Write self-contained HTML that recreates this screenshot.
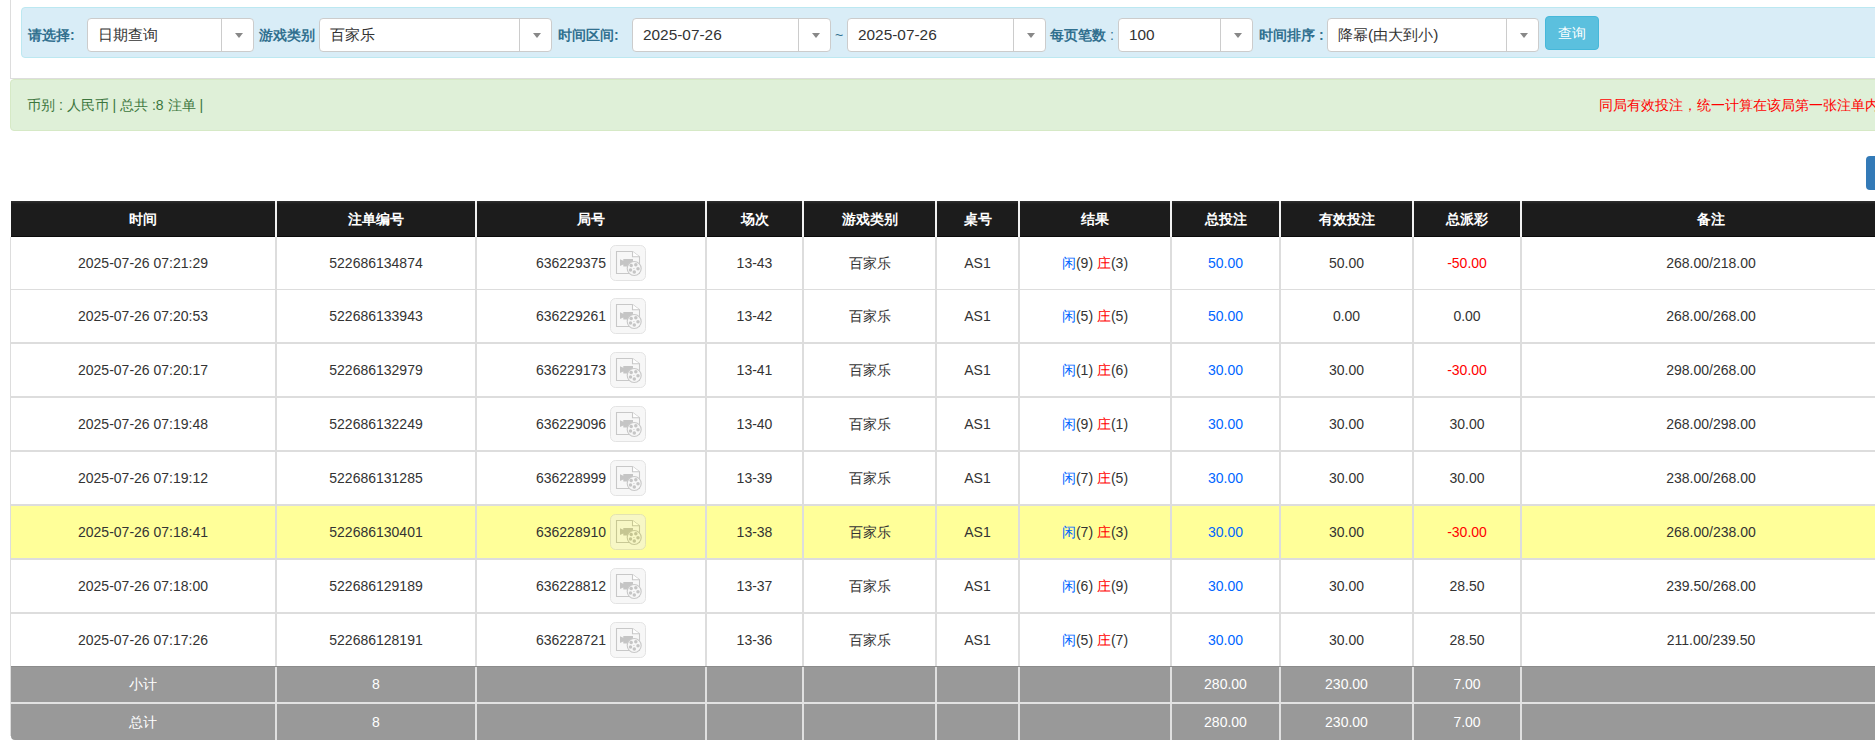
<!DOCTYPE html>
<html><head><meta charset="utf-8">
<style>
*{box-sizing:border-box;margin:0;padding:0}
html,body{width:1875px;height:740px;overflow:hidden;background:#fff;font-family:"Liberation Sans",sans-serif;font-size:14px;color:#333;position:relative}
.a{position:absolute}
#topbox{position:absolute;left:10px;top:-10px;width:1900px;height:89px;border-left:1px solid #ddd;border-bottom:1px solid #ddd}
#info{position:absolute;left:21px;top:7px;width:1900px;height:51px;background:#d9edf7;border:1px solid #bce8f1;border-radius:4px}
.lbl{position:absolute;top:25px;font-weight:bold;color:#31708f;font-size:14px;line-height:20px;white-space:nowrap}
.sel{position:absolute;top:18px;height:34px;background:#fff;border:1px solid #ccc;border-radius:4px}
.sel .v{position:absolute;left:10px;top:0;line-height:32px;font-size:15.4px;color:#333;white-space:nowrap}
.sel .d{position:absolute;right:0;top:0;width:32px;height:32px;border-left:1px solid #ccc}
.sel .d:after{content:"";position:absolute;left:13px;top:14px;border-left:4px solid transparent;border-right:4px solid transparent;border-top:5px solid #888}
#btnq{position:absolute;left:1545px;top:16px;width:54px;height:34px;background:#5bc0de;border:1px solid #46b8da;border-radius:4px;color:#fff;font-size:14px;text-align:center;line-height:32px}
#succ{position:absolute;left:10px;top:79px;width:1900px;height:52px;background:#dff0d8;border:1px solid #d6e9c6;border-radius:4px}
#succ .t{position:absolute;left:16px;top:16px;color:#3c763d;font-size:14px;line-height:18px;white-space:nowrap}
#succ .r{position:absolute;left:1588px;top:16px;color:#f00;font-size:14px;line-height:18px;white-space:nowrap}
#btnb{position:absolute;left:1866px;top:156px;width:40px;height:34px;background:#337ab7;border-radius:4px}
.c{position:absolute;text-align:center;white-space:nowrap;font-size:14px;display:flex;align-items:center;justify-content:center}
.h{color:#fff;font-weight:bold;padding-top:2px}
.cj{padding-top:2px}
.bl{color:#0066ff}.rd{color:#f00}
.ic{display:inline-block;width:36px;height:36px;margin-left:4px;position:relative;left:0;top:0}
.ic svg{display:block}
</style></head><body>
<div id="topbox"></div>
<div id="info"></div>
<div class="lbl" style="left:28px">请选择:</div>
<div class="sel" style="left:87px;width:167px"><div class="v">日期查询</div><div class="d"></div></div>
<div class="lbl" style="left:259px">游戏类别</div>
<div class="sel" style="left:319px;width:233px"><div class="v">百家乐</div><div class="d"></div></div>
<div class="lbl" style="left:558px">时间区间:</div>
<div class="sel" style="left:632px;width:199px"><div class="v">2025-07-26</div><div class="d"></div></div>
<div class="a" style="left:835px;top:25px;color:#31708f;line-height:20px">~</div>
<div class="sel" style="left:847px;width:199px"><div class="v">2025-07-26</div><div class="d"></div></div>
<div class="lbl" style="left:1050px">每页笔数 <span style="font-weight:normal">:</span></div>
<div class="sel" style="left:1118px;width:135px"><div class="v">100</div><div class="d"></div></div>
<div class="lbl" style="left:1259px">时间排序 :</div>
<div class="sel" style="left:1327px;width:212px"><div class="v">降幂(由大到小)</div><div class="d"></div></div>
<div id="btnq">查询</div>
<div id="succ"><div class="t">币别 : 人民币 | 总共 :8 注单 |</div><div class="r">同局有效投注，统一计算在该局第一张注单内</div></div>
<div id="btnb"></div>

<div class="a" style="left:11px;top:201px;width:1894px;height:36px;background:linear-gradient(#303030 0,#1c1c1c 3px)"></div>
<div class="a" style="left:11px;top:236px;width:1894px;height:1px;background:#0a0a0a"></div>
<div class="a" style="left:275px;top:201px;width:2px;height:36px;background:#f2f2f2"></div>
<div class="a" style="left:475px;top:201px;width:2px;height:36px;background:#f2f2f2"></div>
<div class="a" style="left:705px;top:201px;width:2px;height:36px;background:#f2f2f2"></div>
<div class="a" style="left:802px;top:201px;width:2px;height:36px;background:#f2f2f2"></div>
<div class="a" style="left:935px;top:201px;width:2px;height:36px;background:#f2f2f2"></div>
<div class="a" style="left:1018px;top:201px;width:2px;height:36px;background:#f2f2f2"></div>
<div class="a" style="left:1170px;top:201px;width:2px;height:36px;background:#f2f2f2"></div>
<div class="a" style="left:1279px;top:201px;width:2px;height:36px;background:#f2f2f2"></div>
<div class="a" style="left:1412px;top:201px;width:2px;height:36px;background:#f2f2f2"></div>
<div class="a" style="left:1520px;top:201px;width:2px;height:36px;background:#f2f2f2"></div>
<div class="c h" style="left:11px;top:201px;width:264px;height:36px">时间</div>
<div class="c h" style="left:277px;top:201px;width:198px;height:36px">注单编号</div>
<div class="c h" style="left:477px;top:201px;width:228px;height:36px">局号</div>
<div class="c h" style="left:707px;top:201px;width:95px;height:36px">场次</div>
<div class="c h" style="left:804px;top:201px;width:131px;height:36px">游戏类别</div>
<div class="c h" style="left:937px;top:201px;width:81px;height:36px">桌号</div>
<div class="c h" style="left:1020px;top:201px;width:150px;height:36px">结果</div>
<div class="c h" style="left:1172px;top:201px;width:107px;height:36px">总投注</div>
<div class="c h" style="left:1281px;top:201px;width:131px;height:36px">有效投注</div>
<div class="c h" style="left:1414px;top:201px;width:106px;height:36px">总派彩</div>
<div class="c h" style="left:1522px;top:201px;width:378px;height:36px">备注</div>
<div class="a" style="left:10px;top:237px;width:1px;height:499px;background:#ddd"></div>
<div class="a" style="left:11px;top:237px;width:1894px;height:52px;background:#fff"></div>
<div class="a" style="left:11px;top:289px;width:1894px;height:1px;background:#ddd"></div>
<div class="a" style="left:275px;top:237px;width:2px;height:54px;background:#ddd"></div>
<div class="a" style="left:475px;top:237px;width:2px;height:54px;background:#ddd"></div>
<div class="a" style="left:705px;top:237px;width:2px;height:54px;background:#ddd"></div>
<div class="a" style="left:802px;top:237px;width:2px;height:54px;background:#ddd"></div>
<div class="a" style="left:935px;top:237px;width:2px;height:54px;background:#ddd"></div>
<div class="a" style="left:1018px;top:237px;width:2px;height:54px;background:#ddd"></div>
<div class="a" style="left:1170px;top:237px;width:2px;height:54px;background:#ddd"></div>
<div class="a" style="left:1279px;top:237px;width:2px;height:54px;background:#ddd"></div>
<div class="a" style="left:1412px;top:237px;width:2px;height:54px;background:#ddd"></div>
<div class="a" style="left:1520px;top:237px;width:2px;height:54px;background:#ddd"></div>
<div class="c " style="left:11px;top:237px;width:264px;height:52px">2025-07-26 07:21:29</div>
<div class="c " style="left:277px;top:237px;width:198px;height:52px">522686134874</div>
<div class="c " style="left:477px;top:237px;width:228px;height:52px"><span>636229375</span><span class="ic"><svg width="36" height="36" viewBox="0 0 36 36" style="opacity:.5"><rect x="0.5" y="0.5" width="35" height="35" rx="5" ry="5" fill="#f1f1f1" stroke="#c9c9c9"/><path d="M6.5 6.5H22.5L29.5 11.8V28.5H6.5Z" fill="#f1f1f1" stroke="#939393" stroke-width="1.1"/><path d="M22.5 6.5V11.8H29.5" fill="#fff" stroke="#939393" stroke-width="1.1"/><path d="M10 14.2L13.3 15.8V13.9H23V21.4H13.3V19.6L10 21Z" fill="#8d8d8d"/><circle cx="24.2" cy="23.5" r="7" fill="#f1f1f1" stroke="#939393" stroke-width="1.1"/><circle cx="21.2" cy="20.6" r="1.75" fill="#8d8d8d"/><circle cx="25.8" cy="19.8" r="1.75" fill="#8d8d8d"/><circle cx="28" cy="23.7" r="1.75" fill="#8d8d8d"/><circle cx="24.3" cy="27" r="1.75" fill="#8d8d8d"/><circle cx="20.5" cy="25" r="1.75" fill="#8d8d8d"/><rect x="23.2" y="23" width="1.4" height="0.8" fill="#9f9f9f"/></svg></span></div>
<div class="c " style="left:707px;top:237px;width:95px;height:52px">13-43</div>
<div class="c  cj" style="left:804px;top:237px;width:131px;height:52px">百家乐</div>
<div class="c " style="left:937px;top:237px;width:81px;height:52px">AS1</div>
<div class="c  cj" style="left:1020px;top:237px;width:150px;height:52px"><span><span class="bl">闲</span>(9) <span class="rd">庄</span>(3)</span></div>
<div class="c bl" style="left:1172px;top:237px;width:107px;height:52px">50.00</div>
<div class="c " style="left:1281px;top:237px;width:131px;height:52px">50.00</div>
<div class="c rd" style="left:1414px;top:237px;width:106px;height:52px">-50.00</div>
<div class="c " style="left:1522px;top:237px;width:378px;height:52px">268.00/218.00</div>
<div class="a" style="left:11px;top:290px;width:1894px;height:52px;background:#fff"></div>
<div class="a" style="left:11px;top:342px;width:1894px;height:2px;background:#ddd"></div>
<div class="a" style="left:275px;top:290px;width:2px;height:54px;background:#ddd"></div>
<div class="a" style="left:475px;top:290px;width:2px;height:54px;background:#ddd"></div>
<div class="a" style="left:705px;top:290px;width:2px;height:54px;background:#ddd"></div>
<div class="a" style="left:802px;top:290px;width:2px;height:54px;background:#ddd"></div>
<div class="a" style="left:935px;top:290px;width:2px;height:54px;background:#ddd"></div>
<div class="a" style="left:1018px;top:290px;width:2px;height:54px;background:#ddd"></div>
<div class="a" style="left:1170px;top:290px;width:2px;height:54px;background:#ddd"></div>
<div class="a" style="left:1279px;top:290px;width:2px;height:54px;background:#ddd"></div>
<div class="a" style="left:1412px;top:290px;width:2px;height:54px;background:#ddd"></div>
<div class="a" style="left:1520px;top:290px;width:2px;height:54px;background:#ddd"></div>
<div class="c " style="left:11px;top:290px;width:264px;height:52px">2025-07-26 07:20:53</div>
<div class="c " style="left:277px;top:290px;width:198px;height:52px">522686133943</div>
<div class="c " style="left:477px;top:290px;width:228px;height:52px"><span>636229261</span><span class="ic"><svg width="36" height="36" viewBox="0 0 36 36" style="opacity:.5"><rect x="0.5" y="0.5" width="35" height="35" rx="5" ry="5" fill="#f1f1f1" stroke="#c9c9c9"/><path d="M6.5 6.5H22.5L29.5 11.8V28.5H6.5Z" fill="#f1f1f1" stroke="#939393" stroke-width="1.1"/><path d="M22.5 6.5V11.8H29.5" fill="#fff" stroke="#939393" stroke-width="1.1"/><path d="M10 14.2L13.3 15.8V13.9H23V21.4H13.3V19.6L10 21Z" fill="#8d8d8d"/><circle cx="24.2" cy="23.5" r="7" fill="#f1f1f1" stroke="#939393" stroke-width="1.1"/><circle cx="21.2" cy="20.6" r="1.75" fill="#8d8d8d"/><circle cx="25.8" cy="19.8" r="1.75" fill="#8d8d8d"/><circle cx="28" cy="23.7" r="1.75" fill="#8d8d8d"/><circle cx="24.3" cy="27" r="1.75" fill="#8d8d8d"/><circle cx="20.5" cy="25" r="1.75" fill="#8d8d8d"/><rect x="23.2" y="23" width="1.4" height="0.8" fill="#9f9f9f"/></svg></span></div>
<div class="c " style="left:707px;top:290px;width:95px;height:52px">13-42</div>
<div class="c  cj" style="left:804px;top:290px;width:131px;height:52px">百家乐</div>
<div class="c " style="left:937px;top:290px;width:81px;height:52px">AS1</div>
<div class="c  cj" style="left:1020px;top:290px;width:150px;height:52px"><span><span class="bl">闲</span>(5) <span class="rd">庄</span>(5)</span></div>
<div class="c bl" style="left:1172px;top:290px;width:107px;height:52px">50.00</div>
<div class="c " style="left:1281px;top:290px;width:131px;height:52px">0.00</div>
<div class="c " style="left:1414px;top:290px;width:106px;height:52px">0.00</div>
<div class="c " style="left:1522px;top:290px;width:378px;height:52px">268.00/268.00</div>
<div class="a" style="left:11px;top:344px;width:1894px;height:52px;background:#fff"></div>
<div class="a" style="left:11px;top:396px;width:1894px;height:2px;background:#ddd"></div>
<div class="a" style="left:275px;top:344px;width:2px;height:54px;background:#ddd"></div>
<div class="a" style="left:475px;top:344px;width:2px;height:54px;background:#ddd"></div>
<div class="a" style="left:705px;top:344px;width:2px;height:54px;background:#ddd"></div>
<div class="a" style="left:802px;top:344px;width:2px;height:54px;background:#ddd"></div>
<div class="a" style="left:935px;top:344px;width:2px;height:54px;background:#ddd"></div>
<div class="a" style="left:1018px;top:344px;width:2px;height:54px;background:#ddd"></div>
<div class="a" style="left:1170px;top:344px;width:2px;height:54px;background:#ddd"></div>
<div class="a" style="left:1279px;top:344px;width:2px;height:54px;background:#ddd"></div>
<div class="a" style="left:1412px;top:344px;width:2px;height:54px;background:#ddd"></div>
<div class="a" style="left:1520px;top:344px;width:2px;height:54px;background:#ddd"></div>
<div class="c " style="left:11px;top:344px;width:264px;height:52px">2025-07-26 07:20:17</div>
<div class="c " style="left:277px;top:344px;width:198px;height:52px">522686132979</div>
<div class="c " style="left:477px;top:344px;width:228px;height:52px"><span>636229173</span><span class="ic"><svg width="36" height="36" viewBox="0 0 36 36" style="opacity:.5"><rect x="0.5" y="0.5" width="35" height="35" rx="5" ry="5" fill="#f1f1f1" stroke="#c9c9c9"/><path d="M6.5 6.5H22.5L29.5 11.8V28.5H6.5Z" fill="#f1f1f1" stroke="#939393" stroke-width="1.1"/><path d="M22.5 6.5V11.8H29.5" fill="#fff" stroke="#939393" stroke-width="1.1"/><path d="M10 14.2L13.3 15.8V13.9H23V21.4H13.3V19.6L10 21Z" fill="#8d8d8d"/><circle cx="24.2" cy="23.5" r="7" fill="#f1f1f1" stroke="#939393" stroke-width="1.1"/><circle cx="21.2" cy="20.6" r="1.75" fill="#8d8d8d"/><circle cx="25.8" cy="19.8" r="1.75" fill="#8d8d8d"/><circle cx="28" cy="23.7" r="1.75" fill="#8d8d8d"/><circle cx="24.3" cy="27" r="1.75" fill="#8d8d8d"/><circle cx="20.5" cy="25" r="1.75" fill="#8d8d8d"/><rect x="23.2" y="23" width="1.4" height="0.8" fill="#9f9f9f"/></svg></span></div>
<div class="c " style="left:707px;top:344px;width:95px;height:52px">13-41</div>
<div class="c  cj" style="left:804px;top:344px;width:131px;height:52px">百家乐</div>
<div class="c " style="left:937px;top:344px;width:81px;height:52px">AS1</div>
<div class="c  cj" style="left:1020px;top:344px;width:150px;height:52px"><span><span class="bl">闲</span>(1) <span class="rd">庄</span>(6)</span></div>
<div class="c bl" style="left:1172px;top:344px;width:107px;height:52px">30.00</div>
<div class="c " style="left:1281px;top:344px;width:131px;height:52px">30.00</div>
<div class="c rd" style="left:1414px;top:344px;width:106px;height:52px">-30.00</div>
<div class="c " style="left:1522px;top:344px;width:378px;height:52px">298.00/268.00</div>
<div class="a" style="left:11px;top:398px;width:1894px;height:52px;background:#fff"></div>
<div class="a" style="left:11px;top:450px;width:1894px;height:2px;background:#ddd"></div>
<div class="a" style="left:275px;top:398px;width:2px;height:54px;background:#ddd"></div>
<div class="a" style="left:475px;top:398px;width:2px;height:54px;background:#ddd"></div>
<div class="a" style="left:705px;top:398px;width:2px;height:54px;background:#ddd"></div>
<div class="a" style="left:802px;top:398px;width:2px;height:54px;background:#ddd"></div>
<div class="a" style="left:935px;top:398px;width:2px;height:54px;background:#ddd"></div>
<div class="a" style="left:1018px;top:398px;width:2px;height:54px;background:#ddd"></div>
<div class="a" style="left:1170px;top:398px;width:2px;height:54px;background:#ddd"></div>
<div class="a" style="left:1279px;top:398px;width:2px;height:54px;background:#ddd"></div>
<div class="a" style="left:1412px;top:398px;width:2px;height:54px;background:#ddd"></div>
<div class="a" style="left:1520px;top:398px;width:2px;height:54px;background:#ddd"></div>
<div class="c " style="left:11px;top:398px;width:264px;height:52px">2025-07-26 07:19:48</div>
<div class="c " style="left:277px;top:398px;width:198px;height:52px">522686132249</div>
<div class="c " style="left:477px;top:398px;width:228px;height:52px"><span>636229096</span><span class="ic"><svg width="36" height="36" viewBox="0 0 36 36" style="opacity:.5"><rect x="0.5" y="0.5" width="35" height="35" rx="5" ry="5" fill="#f1f1f1" stroke="#c9c9c9"/><path d="M6.5 6.5H22.5L29.5 11.8V28.5H6.5Z" fill="#f1f1f1" stroke="#939393" stroke-width="1.1"/><path d="M22.5 6.5V11.8H29.5" fill="#fff" stroke="#939393" stroke-width="1.1"/><path d="M10 14.2L13.3 15.8V13.9H23V21.4H13.3V19.6L10 21Z" fill="#8d8d8d"/><circle cx="24.2" cy="23.5" r="7" fill="#f1f1f1" stroke="#939393" stroke-width="1.1"/><circle cx="21.2" cy="20.6" r="1.75" fill="#8d8d8d"/><circle cx="25.8" cy="19.8" r="1.75" fill="#8d8d8d"/><circle cx="28" cy="23.7" r="1.75" fill="#8d8d8d"/><circle cx="24.3" cy="27" r="1.75" fill="#8d8d8d"/><circle cx="20.5" cy="25" r="1.75" fill="#8d8d8d"/><rect x="23.2" y="23" width="1.4" height="0.8" fill="#9f9f9f"/></svg></span></div>
<div class="c " style="left:707px;top:398px;width:95px;height:52px">13-40</div>
<div class="c  cj" style="left:804px;top:398px;width:131px;height:52px">百家乐</div>
<div class="c " style="left:937px;top:398px;width:81px;height:52px">AS1</div>
<div class="c  cj" style="left:1020px;top:398px;width:150px;height:52px"><span><span class="bl">闲</span>(9) <span class="rd">庄</span>(1)</span></div>
<div class="c bl" style="left:1172px;top:398px;width:107px;height:52px">30.00</div>
<div class="c " style="left:1281px;top:398px;width:131px;height:52px">30.00</div>
<div class="c " style="left:1414px;top:398px;width:106px;height:52px">30.00</div>
<div class="c " style="left:1522px;top:398px;width:378px;height:52px">268.00/298.00</div>
<div class="a" style="left:11px;top:452px;width:1894px;height:52px;background:#fff"></div>
<div class="a" style="left:11px;top:504px;width:1894px;height:2px;background:#ddd"></div>
<div class="a" style="left:275px;top:452px;width:2px;height:54px;background:#ddd"></div>
<div class="a" style="left:475px;top:452px;width:2px;height:54px;background:#ddd"></div>
<div class="a" style="left:705px;top:452px;width:2px;height:54px;background:#ddd"></div>
<div class="a" style="left:802px;top:452px;width:2px;height:54px;background:#ddd"></div>
<div class="a" style="left:935px;top:452px;width:2px;height:54px;background:#ddd"></div>
<div class="a" style="left:1018px;top:452px;width:2px;height:54px;background:#ddd"></div>
<div class="a" style="left:1170px;top:452px;width:2px;height:54px;background:#ddd"></div>
<div class="a" style="left:1279px;top:452px;width:2px;height:54px;background:#ddd"></div>
<div class="a" style="left:1412px;top:452px;width:2px;height:54px;background:#ddd"></div>
<div class="a" style="left:1520px;top:452px;width:2px;height:54px;background:#ddd"></div>
<div class="c " style="left:11px;top:452px;width:264px;height:52px">2025-07-26 07:19:12</div>
<div class="c " style="left:277px;top:452px;width:198px;height:52px">522686131285</div>
<div class="c " style="left:477px;top:452px;width:228px;height:52px"><span>636228999</span><span class="ic"><svg width="36" height="36" viewBox="0 0 36 36" style="opacity:.5"><rect x="0.5" y="0.5" width="35" height="35" rx="5" ry="5" fill="#f1f1f1" stroke="#c9c9c9"/><path d="M6.5 6.5H22.5L29.5 11.8V28.5H6.5Z" fill="#f1f1f1" stroke="#939393" stroke-width="1.1"/><path d="M22.5 6.5V11.8H29.5" fill="#fff" stroke="#939393" stroke-width="1.1"/><path d="M10 14.2L13.3 15.8V13.9H23V21.4H13.3V19.6L10 21Z" fill="#8d8d8d"/><circle cx="24.2" cy="23.5" r="7" fill="#f1f1f1" stroke="#939393" stroke-width="1.1"/><circle cx="21.2" cy="20.6" r="1.75" fill="#8d8d8d"/><circle cx="25.8" cy="19.8" r="1.75" fill="#8d8d8d"/><circle cx="28" cy="23.7" r="1.75" fill="#8d8d8d"/><circle cx="24.3" cy="27" r="1.75" fill="#8d8d8d"/><circle cx="20.5" cy="25" r="1.75" fill="#8d8d8d"/><rect x="23.2" y="23" width="1.4" height="0.8" fill="#9f9f9f"/></svg></span></div>
<div class="c " style="left:707px;top:452px;width:95px;height:52px">13-39</div>
<div class="c  cj" style="left:804px;top:452px;width:131px;height:52px">百家乐</div>
<div class="c " style="left:937px;top:452px;width:81px;height:52px">AS1</div>
<div class="c  cj" style="left:1020px;top:452px;width:150px;height:52px"><span><span class="bl">闲</span>(7) <span class="rd">庄</span>(5)</span></div>
<div class="c bl" style="left:1172px;top:452px;width:107px;height:52px">30.00</div>
<div class="c " style="left:1281px;top:452px;width:131px;height:52px">30.00</div>
<div class="c " style="left:1414px;top:452px;width:106px;height:52px">30.00</div>
<div class="c " style="left:1522px;top:452px;width:378px;height:52px">238.00/268.00</div>
<div class="a" style="left:11px;top:506px;width:1894px;height:52px;background:#ffff99"></div>
<div class="a" style="left:11px;top:558px;width:1894px;height:2px;background:#ddd"></div>
<div class="a" style="left:275px;top:506px;width:2px;height:54px;background:#ddd"></div>
<div class="a" style="left:475px;top:506px;width:2px;height:54px;background:#ddd"></div>
<div class="a" style="left:705px;top:506px;width:2px;height:54px;background:#ddd"></div>
<div class="a" style="left:802px;top:506px;width:2px;height:54px;background:#ddd"></div>
<div class="a" style="left:935px;top:506px;width:2px;height:54px;background:#ddd"></div>
<div class="a" style="left:1018px;top:506px;width:2px;height:54px;background:#ddd"></div>
<div class="a" style="left:1170px;top:506px;width:2px;height:54px;background:#ddd"></div>
<div class="a" style="left:1279px;top:506px;width:2px;height:54px;background:#ddd"></div>
<div class="a" style="left:1412px;top:506px;width:2px;height:54px;background:#ddd"></div>
<div class="a" style="left:1520px;top:506px;width:2px;height:54px;background:#ddd"></div>
<div class="c " style="left:11px;top:506px;width:264px;height:52px">2025-07-26 07:18:41</div>
<div class="c " style="left:277px;top:506px;width:198px;height:52px">522686130401</div>
<div class="c " style="left:477px;top:506px;width:228px;height:52px"><span>636228910</span><span class="ic"><svg width="36" height="36" viewBox="0 0 36 36" style="opacity:.5"><rect x="0.5" y="0.5" width="35" height="35" rx="5" ry="5" fill="#f1f1f1" stroke="#c9c9c9"/><path d="M6.5 6.5H22.5L29.5 11.8V28.5H6.5Z" fill="#f1f1f1" stroke="#939393" stroke-width="1.1"/><path d="M22.5 6.5V11.8H29.5" fill="#fff" stroke="#939393" stroke-width="1.1"/><path d="M10 14.2L13.3 15.8V13.9H23V21.4H13.3V19.6L10 21Z" fill="#8d8d8d"/><circle cx="24.2" cy="23.5" r="7" fill="#f1f1f1" stroke="#939393" stroke-width="1.1"/><circle cx="21.2" cy="20.6" r="1.75" fill="#8d8d8d"/><circle cx="25.8" cy="19.8" r="1.75" fill="#8d8d8d"/><circle cx="28" cy="23.7" r="1.75" fill="#8d8d8d"/><circle cx="24.3" cy="27" r="1.75" fill="#8d8d8d"/><circle cx="20.5" cy="25" r="1.75" fill="#8d8d8d"/><rect x="23.2" y="23" width="1.4" height="0.8" fill="#9f9f9f"/></svg></span></div>
<div class="c " style="left:707px;top:506px;width:95px;height:52px">13-38</div>
<div class="c  cj" style="left:804px;top:506px;width:131px;height:52px">百家乐</div>
<div class="c " style="left:937px;top:506px;width:81px;height:52px">AS1</div>
<div class="c  cj" style="left:1020px;top:506px;width:150px;height:52px"><span><span class="bl">闲</span>(7) <span class="rd">庄</span>(3)</span></div>
<div class="c bl" style="left:1172px;top:506px;width:107px;height:52px">30.00</div>
<div class="c " style="left:1281px;top:506px;width:131px;height:52px">30.00</div>
<div class="c rd" style="left:1414px;top:506px;width:106px;height:52px">-30.00</div>
<div class="c " style="left:1522px;top:506px;width:378px;height:52px">268.00/238.00</div>
<div class="a" style="left:11px;top:560px;width:1894px;height:52px;background:#fff"></div>
<div class="a" style="left:11px;top:612px;width:1894px;height:2px;background:#ddd"></div>
<div class="a" style="left:275px;top:560px;width:2px;height:54px;background:#ddd"></div>
<div class="a" style="left:475px;top:560px;width:2px;height:54px;background:#ddd"></div>
<div class="a" style="left:705px;top:560px;width:2px;height:54px;background:#ddd"></div>
<div class="a" style="left:802px;top:560px;width:2px;height:54px;background:#ddd"></div>
<div class="a" style="left:935px;top:560px;width:2px;height:54px;background:#ddd"></div>
<div class="a" style="left:1018px;top:560px;width:2px;height:54px;background:#ddd"></div>
<div class="a" style="left:1170px;top:560px;width:2px;height:54px;background:#ddd"></div>
<div class="a" style="left:1279px;top:560px;width:2px;height:54px;background:#ddd"></div>
<div class="a" style="left:1412px;top:560px;width:2px;height:54px;background:#ddd"></div>
<div class="a" style="left:1520px;top:560px;width:2px;height:54px;background:#ddd"></div>
<div class="c " style="left:11px;top:560px;width:264px;height:52px">2025-07-26 07:18:00</div>
<div class="c " style="left:277px;top:560px;width:198px;height:52px">522686129189</div>
<div class="c " style="left:477px;top:560px;width:228px;height:52px"><span>636228812</span><span class="ic"><svg width="36" height="36" viewBox="0 0 36 36" style="opacity:.5"><rect x="0.5" y="0.5" width="35" height="35" rx="5" ry="5" fill="#f1f1f1" stroke="#c9c9c9"/><path d="M6.5 6.5H22.5L29.5 11.8V28.5H6.5Z" fill="#f1f1f1" stroke="#939393" stroke-width="1.1"/><path d="M22.5 6.5V11.8H29.5" fill="#fff" stroke="#939393" stroke-width="1.1"/><path d="M10 14.2L13.3 15.8V13.9H23V21.4H13.3V19.6L10 21Z" fill="#8d8d8d"/><circle cx="24.2" cy="23.5" r="7" fill="#f1f1f1" stroke="#939393" stroke-width="1.1"/><circle cx="21.2" cy="20.6" r="1.75" fill="#8d8d8d"/><circle cx="25.8" cy="19.8" r="1.75" fill="#8d8d8d"/><circle cx="28" cy="23.7" r="1.75" fill="#8d8d8d"/><circle cx="24.3" cy="27" r="1.75" fill="#8d8d8d"/><circle cx="20.5" cy="25" r="1.75" fill="#8d8d8d"/><rect x="23.2" y="23" width="1.4" height="0.8" fill="#9f9f9f"/></svg></span></div>
<div class="c " style="left:707px;top:560px;width:95px;height:52px">13-37</div>
<div class="c  cj" style="left:804px;top:560px;width:131px;height:52px">百家乐</div>
<div class="c " style="left:937px;top:560px;width:81px;height:52px">AS1</div>
<div class="c  cj" style="left:1020px;top:560px;width:150px;height:52px"><span><span class="bl">闲</span>(6) <span class="rd">庄</span>(9)</span></div>
<div class="c bl" style="left:1172px;top:560px;width:107px;height:52px">30.00</div>
<div class="c " style="left:1281px;top:560px;width:131px;height:52px">30.00</div>
<div class="c " style="left:1414px;top:560px;width:106px;height:52px">28.50</div>
<div class="c " style="left:1522px;top:560px;width:378px;height:52px">239.50/268.00</div>
<div class="a" style="left:11px;top:614px;width:1894px;height:52px;background:#fff"></div>
<div class="a" style="left:275px;top:614px;width:2px;height:52px;background:#ddd"></div>
<div class="a" style="left:475px;top:614px;width:2px;height:52px;background:#ddd"></div>
<div class="a" style="left:705px;top:614px;width:2px;height:52px;background:#ddd"></div>
<div class="a" style="left:802px;top:614px;width:2px;height:52px;background:#ddd"></div>
<div class="a" style="left:935px;top:614px;width:2px;height:52px;background:#ddd"></div>
<div class="a" style="left:1018px;top:614px;width:2px;height:52px;background:#ddd"></div>
<div class="a" style="left:1170px;top:614px;width:2px;height:52px;background:#ddd"></div>
<div class="a" style="left:1279px;top:614px;width:2px;height:52px;background:#ddd"></div>
<div class="a" style="left:1412px;top:614px;width:2px;height:52px;background:#ddd"></div>
<div class="a" style="left:1520px;top:614px;width:2px;height:52px;background:#ddd"></div>
<div class="c " style="left:11px;top:614px;width:264px;height:52px">2025-07-26 07:17:26</div>
<div class="c " style="left:277px;top:614px;width:198px;height:52px">522686128191</div>
<div class="c " style="left:477px;top:614px;width:228px;height:52px"><span>636228721</span><span class="ic"><svg width="36" height="36" viewBox="0 0 36 36" style="opacity:.5"><rect x="0.5" y="0.5" width="35" height="35" rx="5" ry="5" fill="#f1f1f1" stroke="#c9c9c9"/><path d="M6.5 6.5H22.5L29.5 11.8V28.5H6.5Z" fill="#f1f1f1" stroke="#939393" stroke-width="1.1"/><path d="M22.5 6.5V11.8H29.5" fill="#fff" stroke="#939393" stroke-width="1.1"/><path d="M10 14.2L13.3 15.8V13.9H23V21.4H13.3V19.6L10 21Z" fill="#8d8d8d"/><circle cx="24.2" cy="23.5" r="7" fill="#f1f1f1" stroke="#939393" stroke-width="1.1"/><circle cx="21.2" cy="20.6" r="1.75" fill="#8d8d8d"/><circle cx="25.8" cy="19.8" r="1.75" fill="#8d8d8d"/><circle cx="28" cy="23.7" r="1.75" fill="#8d8d8d"/><circle cx="24.3" cy="27" r="1.75" fill="#8d8d8d"/><circle cx="20.5" cy="25" r="1.75" fill="#8d8d8d"/><rect x="23.2" y="23" width="1.4" height="0.8" fill="#9f9f9f"/></svg></span></div>
<div class="c " style="left:707px;top:614px;width:95px;height:52px">13-36</div>
<div class="c  cj" style="left:804px;top:614px;width:131px;height:52px">百家乐</div>
<div class="c " style="left:937px;top:614px;width:81px;height:52px">AS1</div>
<div class="c  cj" style="left:1020px;top:614px;width:150px;height:52px"><span><span class="bl">闲</span>(5) <span class="rd">庄</span>(7)</span></div>
<div class="c bl" style="left:1172px;top:614px;width:107px;height:52px">30.00</div>
<div class="c " style="left:1281px;top:614px;width:131px;height:52px">30.00</div>
<div class="c " style="left:1414px;top:614px;width:106px;height:52px">28.50</div>
<div class="c " style="left:1522px;top:614px;width:378px;height:52px">211.00/239.50</div>
<div class="a" style="left:11px;top:666px;width:1894px;height:36px;background:#999;border-bottom-left-radius:0px"></div>
<div class="a" style="left:275px;top:666px;width:2px;height:36px;background:#e0e0e0"></div>
<div class="a" style="left:475px;top:666px;width:2px;height:36px;background:#e0e0e0"></div>
<div class="a" style="left:705px;top:666px;width:2px;height:36px;background:#e0e0e0"></div>
<div class="a" style="left:802px;top:666px;width:2px;height:36px;background:#e0e0e0"></div>
<div class="a" style="left:935px;top:666px;width:2px;height:36px;background:#e0e0e0"></div>
<div class="a" style="left:1018px;top:666px;width:2px;height:36px;background:#e0e0e0"></div>
<div class="a" style="left:1170px;top:666px;width:2px;height:36px;background:#e0e0e0"></div>
<div class="a" style="left:1279px;top:666px;width:2px;height:36px;background:#e0e0e0"></div>
<div class="a" style="left:1412px;top:666px;width:2px;height:36px;background:#e0e0e0"></div>
<div class="a" style="left:1520px;top:666px;width:2px;height:36px;background:#e0e0e0"></div>
<div class="c h2 cj" style="left:11px;top:666px;width:264px;height:36px">小计</div>
<div class="c h2" style="left:277px;top:666px;width:198px;height:36px">8</div>
<div class="c h2" style="left:1172px;top:666px;width:107px;height:36px">280.00</div>
<div class="c h2" style="left:1281px;top:666px;width:131px;height:36px">230.00</div>
<div class="c h2" style="left:1414px;top:666px;width:106px;height:36px">7.00</div>
<div class="a" style="left:11px;top:704px;width:1894px;height:36px;background:#999;border-bottom-left-radius:4px"></div>
<div class="a" style="left:275px;top:704px;width:2px;height:36px;background:#e0e0e0"></div>
<div class="a" style="left:475px;top:704px;width:2px;height:36px;background:#e0e0e0"></div>
<div class="a" style="left:705px;top:704px;width:2px;height:36px;background:#e0e0e0"></div>
<div class="a" style="left:802px;top:704px;width:2px;height:36px;background:#e0e0e0"></div>
<div class="a" style="left:935px;top:704px;width:2px;height:36px;background:#e0e0e0"></div>
<div class="a" style="left:1018px;top:704px;width:2px;height:36px;background:#e0e0e0"></div>
<div class="a" style="left:1170px;top:704px;width:2px;height:36px;background:#e0e0e0"></div>
<div class="a" style="left:1279px;top:704px;width:2px;height:36px;background:#e0e0e0"></div>
<div class="a" style="left:1412px;top:704px;width:2px;height:36px;background:#e0e0e0"></div>
<div class="a" style="left:1520px;top:704px;width:2px;height:36px;background:#e0e0e0"></div>
<div class="c h2 cj" style="left:11px;top:704px;width:264px;height:36px">总计</div>
<div class="c h2" style="left:277px;top:704px;width:198px;height:36px">8</div>
<div class="c h2" style="left:1172px;top:704px;width:107px;height:36px">280.00</div>
<div class="c h2" style="left:1281px;top:704px;width:131px;height:36px">230.00</div>
<div class="c h2" style="left:1414px;top:704px;width:106px;height:36px">7.00</div>
<div class="a" style="left:11px;top:666px;width:1894px;height:1px;background:#8c8c8c"></div>
<div class="a" style="left:11px;top:702px;width:1894px;height:2px;background:#e2e2e2"></div>
<style>.h2{color:#fff}</style>
</body></html>
